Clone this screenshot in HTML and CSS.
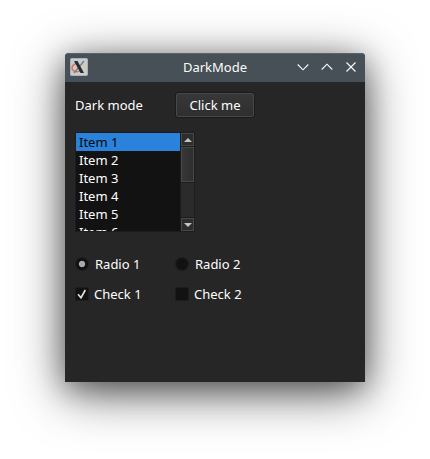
FILE: index.html
```html
<!DOCTYPE html>
<html lang="en">
<head>
<meta charset="utf-8">
<title>DarkMode</title>
<link rel="stylesheet" href="styles.css">
</head>
<body>
<main class="window">
  <header class="titlebar">
    <svg class="logo" viewBox="0 0 18 18">
      <rect x=".5" y=".5" width="17" height="17" rx="1" fill="#c5cdd2" stroke="#aab2b8"/>
      <path d="M6 5.500C1.500 7 .8 11.500 4 13c2 1 5 .7 7-.3" fill="none" stroke="#e8704a" stroke-width="1.500"/>
      <path d="M11 5.800c4 .2 6 2.200 4.500 5-.7 1.200-2 2-3.500 2.400" fill="none" stroke="#e5c49a" stroke-width="1.300"/>
      <path d="M14 3L4 15" stroke="#777b7d" stroke-width="1.200"/>
      <path d="M4 3h3.500L14 15h-3.500z" fill="#292d30"/>
    </svg>
    <h1 class="title">DarkMode</h1>
    <div class="controls">
      <svg viewBox="0 0 12 12"><path d="M.7 3.500L6 8.800l5.300-5.300"/></svg>
      <svg viewBox="0 0 12 12"><path d="M.7 8.500L6 3.200l5.300 5.300"/></svg>
      <svg viewBox="0 0 12 12"><path d="M1.500 1.500l9 9m0-9l-9 9"/></svg>
    </div>
  </header>
  <section class="content">
    <div class="row action">
      <span>Dark mode</span>
      <button class="button" type="button">Click me</button>
    </div>
    <div class="listbox">
      <ul class="items">
        <li class="selected">Item 1</li>
        <li>Item 2</li>
        <li>Item 3</li>
        <li>Item 4</li>
        <li>Item 5</li>
        <li>Item 6</li>
      </ul>
      <div class="scrollbar">
        <div class="arrow"><svg viewBox="0 0 8 4"><path d="M0 4L4 0l4 4z"/></svg></div>
        <div class="thumb"></div>
        <div class="track"></div>
        <div class="arrow"><svg viewBox="0 0 8 4"><path d="M0 0l4 4 4-4z"/></svg></div>
      </div>
    </div>
    <div class="row radios">
      <label class="option"><span class="radio on"></span>Radio 1</label>
      <label class="option"><span class="radio"></span>Radio 2</label>
    </div>
    <div class="row checks">
      <label class="option"><span class="check"><svg viewBox="0 0 12 12"><path d="M2 6.200L5 9.700 9.300 2"/></svg></span>Check 1</label>
      <label class="option"><span class="check"></span>Check 2</label>
    </div>
  </section>
</main>
</body>
</html>
```
FILE: styles.css
```css
* { box-sizing: border-box; }
body {
  margin: 0;
  height: 459px;
  overflow: hidden;
  background: #fff;
  color: #fff;
  font: 13px/18px "Noto Sans", sans-serif;
}
svg { display: block; }
.window {
  width: 300px;
  height: 329px;
  margin: 53px 0 0 65px;
  float: left;
  background: #262626;
  border-radius: 4px 4px 0 0;
  box-shadow: 0 11px 50px rgba(0, 0, 0, .62), 0 6px 26px rgba(0, 0, 0, .3);
}
.titlebar {
  height: 29px;
  display: grid;
  grid-template-columns: 90px 1fr 90px;
  align-items: center;
  padding: 0 8px 2px 5px;
  background: #475057;
  border-top: 1px solid #5a646b;
  border-radius: 4px 4px 0 0;
}
.logo { width: 18px; height: 18px; }
.title {
  margin: 0;
  padding-left: 3px;
  font-size: 13px;
  line-height: 18px;
  font-weight: 400;
  text-align: center;
  color: #fcfcfc;
}
.controls { display: flex; gap: 12px; justify-content: flex-end; }
.controls svg {
  width: 12px;
  height: 12px;
  fill: none;
  stroke: #fcfcfc;
  stroke-width: 1.1;
}
.content { padding: 10px; }
.row { display: grid; grid-template-columns: 100px 100px; align-items: center; }
.action { height: 26px; }
.button {
  width: 80px;
  height: 26px;
  padding: 0;
  border: 1px solid #1b1b1b;
  border-radius: 3px;
  background: linear-gradient(#383838, #2e2e2e);
  box-shadow: inset 0 0 0 1px #484848;
  color: #fff;
  font: inherit;
}
.listbox {
  width: 120px;
  height: 100px;
  margin-top: 14px;
  display: flex;
  border: 1px solid #1d1d1d;
}
.items {
  width: 104px;
  height: 98px;
  margin: 0;
  padding: 0;
  overflow: hidden;
  list-style: none;
  background: #121212;
}
.items li { height: 18px; padding-left: 3px; }
.items .selected { background: #2a82da; color: #080808; }
.scrollbar {
  width: 14px;
  display: flex;
  flex-direction: column;
  padding-left: 1px;
  background: #1b1b1b;
}
.arrow {
  height: 13px;
  display: flex;
  justify-content: center;
  padding-top: 4px;
  border: 1px solid #484848;
  background: #2d2d2d;
}
.arrow svg { width: 8px; height: 4px; fill: #c4c4c4; }
.thumb {
  height: 35px;
  margin: 1px 0;
  border: 1px solid #484848;
  background: linear-gradient(90deg, #373737, #2e2e2e);
}
.track { flex: 1; margin-bottom: 1px; background: #2b2b2b; }
.radios { height: 20px; margin-top: 22px; }
.checks { height: 20px; margin-top: 10px; }
.option { display: flex; align-items: center; }
.radio, .check {
  width: 14px;
  height: 14px;
  display: grid;
  place-items: center;
  border: 1px solid #1d1d1d;
  background: #121212;
}
.radio { border-radius: 50%; margin-right: 6px; }
.radio.on { background: radial-gradient(circle, #a9a9a9 0 2.8px, #121212 3.6px); }
.check { margin-right: 5px; }
.check svg {
  width: 12px;
  height: 12px;
  fill: none;
  stroke: #ddd;
  stroke-width: 1.7;
}
```
